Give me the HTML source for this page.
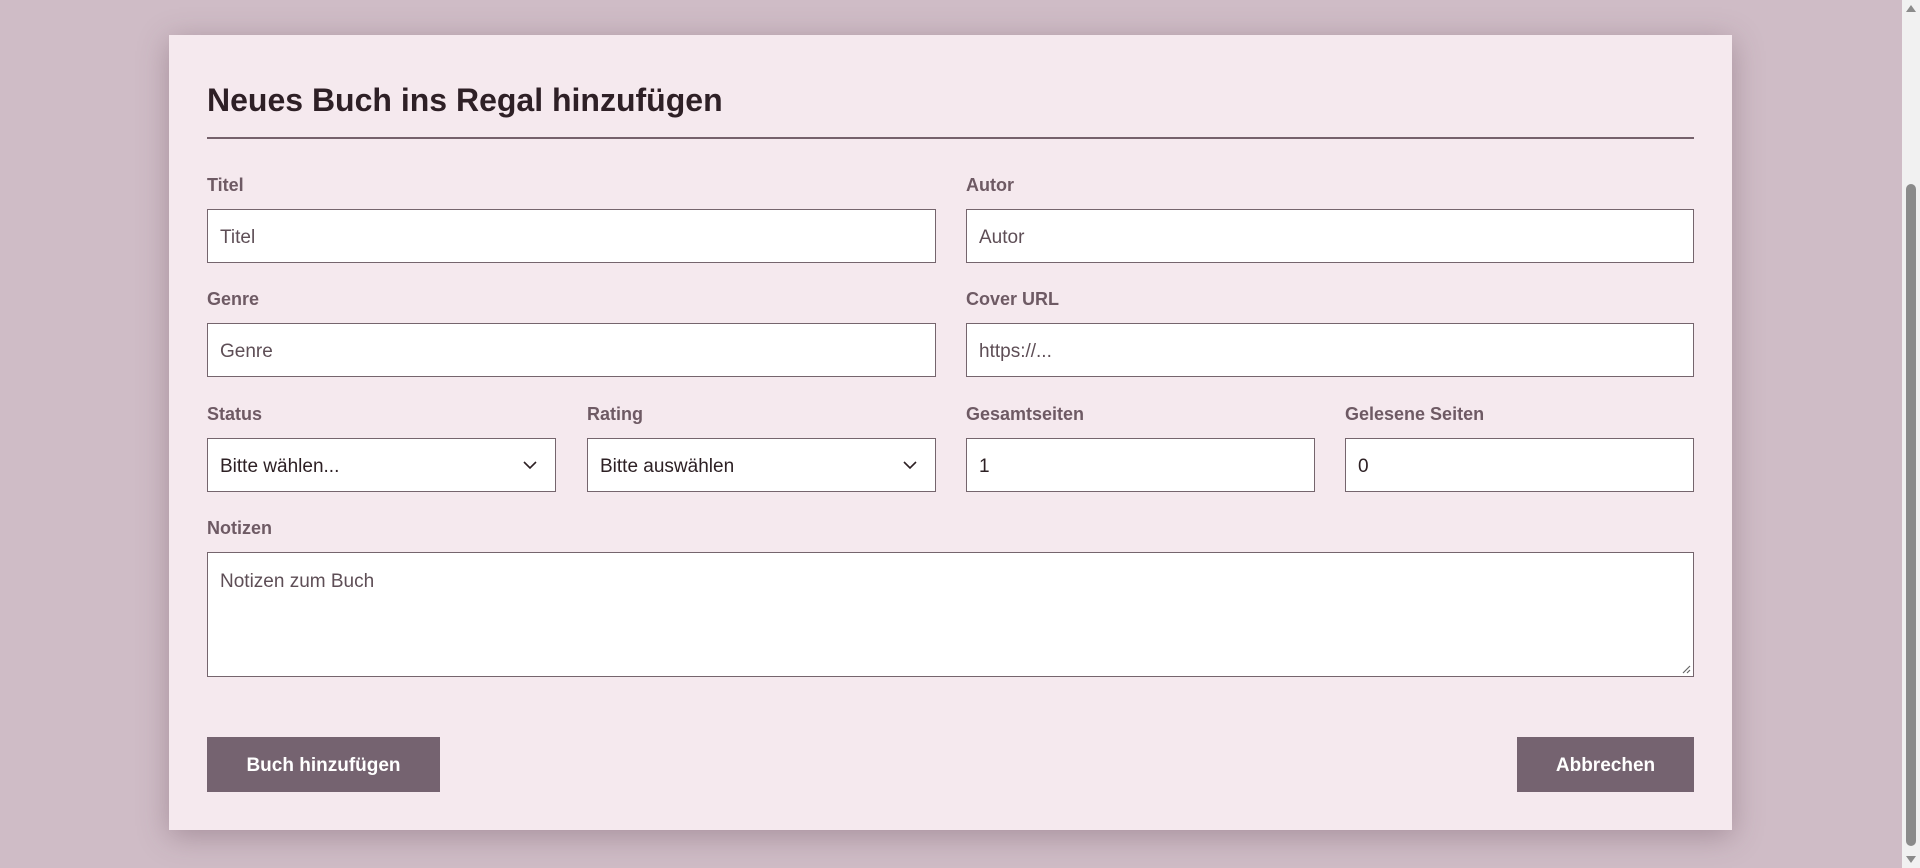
<!DOCTYPE html>
<html><head><meta charset="utf-8"><style>
*{box-sizing:border-box;margin:0;padding:0}
html,body{width:1920px;height:868px;overflow:hidden;background:#cfbcc6;font-family:"Liberation Sans",sans-serif}
.card{position:absolute;left:169px;top:35px;width:1563px;height:795px;background:#f5e9ee;box-shadow:0 6px 28px rgba(90,60,75,.35)}
.abs{position:absolute}
h1{position:absolute;left:207px;top:82px;font-size:32px;font-weight:bold;color:#2e2026;letter-spacing:0px}
.hr{position:absolute;left:207px;top:137px;width:1487px;height:2px;background:#75616b}
.lbl{position:absolute;font-size:18px;font-weight:bold;color:#6e5a64}
.inp{position:absolute;height:54px;background:#fff;border:1px solid #75656d;font-size:19px;color:#5e4e56;padding-left:12px;line-height:56px}
.sel{color:#2d2024}
.chev{position:absolute;right:18px;top:19px}
.btn{position:absolute;top:737px;height:55px;background:#756370;color:#fff;font-weight:bold;font-size:19px;text-align:center;line-height:58px}
.sb{position:absolute;left:1902px;top:0;width:18px;height:868px;background:#f1f1f1}
.thumb{position:absolute;left:1906px;top:184px;width:10px;height:662px;background:#8b8b8b;border-radius:5px}
</style></head><body>
<div class="card"></div>
<h1>Neues Buch ins Regal hinzufügen</h1>
<div class="hr"></div>

<div class="lbl" style="left:207px;top:175px">Titel</div>
<div class="lbl" style="left:966px;top:175px">Autor</div>
<div class="inp" style="left:207px;top:209px;width:729px">Titel</div>
<div class="inp" style="left:966px;top:209px;width:728px">Autor</div>

<div class="lbl" style="left:207px;top:289px">Genre</div>
<div class="lbl" style="left:966px;top:289px">Cover URL</div>
<div class="inp" style="left:207px;top:323px;width:729px">Genre</div>
<div class="inp" style="left:966px;top:323px;width:728px">https://...</div>

<div class="lbl" style="left:207px;top:404px">Status</div>
<div class="lbl" style="left:587px;top:404px">Rating</div>
<div class="lbl" style="left:966px;top:404px">Gesamtseiten</div>
<div class="lbl" style="left:1345px;top:404px">Gelesene Seiten</div>
<div class="inp sel" style="left:207px;top:438px;width:349px">Bitte wählen...<svg class="chev" width="14" height="14" viewBox="0 0 14 14"><path d="M1 4l6 6 6-6" fill="none" stroke="#2d2024" stroke-width="1.6"/></svg></div>
<div class="inp sel" style="left:587px;top:438px;width:349px">Bitte auswählen<svg class="chev" width="14" height="14" viewBox="0 0 14 14"><path d="M1 4l6 6 6-6" fill="none" stroke="#2d2024" stroke-width="1.6"/></svg></div>
<div class="inp sel" style="left:966px;top:438px;width:349px">1</div>
<div class="inp sel" style="left:1345px;top:438px;width:349px">0</div>

<div class="lbl" style="left:207px;top:518px">Notizen</div>
<div class="inp" style="left:207px;top:552px;width:1487px;height:125px;line-height:normal;padding-top:18px">Notizen zum Buch
<svg class="abs" style="right:2px;bottom:2px" width="10" height="10" viewBox="0 0 10 10"><path d="M9 2L2 9M9 6L6 9" stroke="#666" stroke-width="1.2"/></svg></div>

<div class="btn" style="left:207px;width:233px">Buch hinzufügen</div>
<div class="btn" style="left:1517px;width:177px">Abbrechen</div>

<div class="sb"></div>
<div class="thumb"></div>
<svg class="abs" style="left:1905px;top:3px" width="12" height="10"><path d="M1 9L6 2 11 9Z" fill="#8b8b8b"/></svg>
<svg class="abs" style="left:1905px;top:855px" width="12" height="10"><path d="M1 1L6 8 11 1Z" fill="#8b8b8b"/></svg>
</body></html>
